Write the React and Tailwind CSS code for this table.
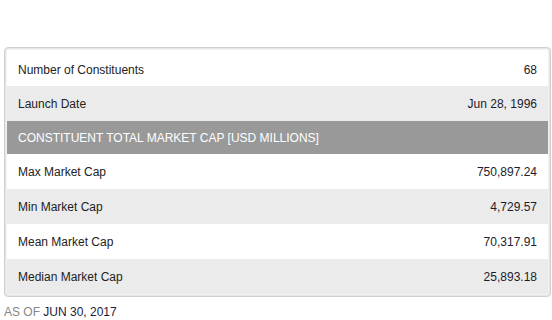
import React from 'react';

const topRows = [
  { label: 'Number of Constituents', value: '68', h: 'h-[36px] pt-[3px]', bg: 'bg-white' },
  { label: 'Launch Date', value: 'Jun 28, 1996', h: 'h-[35px] pt-[1px]', bg: 'bg-[#ebebeb]' },
];

const capRows = [
  { label: 'Max Market Cap', value: '750,897.24', bg: 'bg-white' },
  { label: 'Min Market Cap', value: '4,729.57', bg: 'bg-[#ebebeb]' },
  { label: 'Mean Market Cap', value: '70,317.91', bg: 'bg-white' },
  { label: 'Median Market Cap', value: '25,893.18', bg: 'bg-[#ebebeb]' },
];

const Row = ({ label, value, h = 'h-[35px] pt-[1px]', bg }) => (
  <div className={`flex items-center justify-between px-[11px] ${h} ${bg}`}>
    <span className="text-[12px] text-[#222]">{label}</span>
    <span className="text-[12px] text-[#1c1c2c]">{value}</span>
  </div>
);

const App = () => {
  return (
    <div className="w-[552px] h-[320px] bg-white font-['Liberation_Sans',Arial,sans-serif]">
      <div className="pt-[47px] pl-[4px] pr-[1px]">
        {/* Stats box */}
        <div className="border border-[#cfcfcf] rounded-[4px] bg-[#f2f2f2] p-[2px] shadow-[inset_0_0_0_1px_#e6e6e6]">
          {topRows.map((r) => (
            <Row key={r.label} {...r} />
          ))}
          <div className="flex items-center h-[33px] px-[11px] bg-[#999999]">
            <span className="text-[12px] text-white">CONSTITUENT TOTAL MARKET CAP [USD MILLIONS]</span>
          </div>
          {capRows.map((r) => (
            <Row key={r.label} {...r} />
          ))}
        </div>

        {/* As of date */}
        <div className="mt-[8px] text-[12px] leading-[14px]">
          <span className="text-[#888]">AS OF </span>
          <span className="text-[#1c1c3c]">JUN 30, 2017</span>
        </div>
      </div>
    </div>
  );
};

export default App;
